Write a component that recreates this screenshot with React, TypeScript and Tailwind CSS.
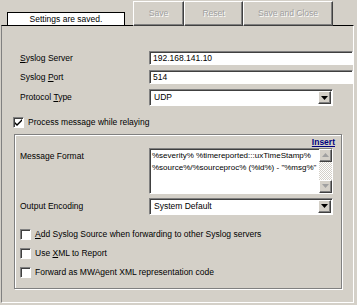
import React from 'react'

const font = { fontFamily: '"Liberation Sans", Arial, sans-serif' }

function Sunken({ className = '', children }: { className?: string; children?: React.ReactNode }) {
  return (
    <div
      className={`border border-t-[#808080] border-l-[#808080] border-b-white border-r-white bg-white shadow-[inset_1px_1px_0_#404040] ${className}`}
    >
      {children}
    </div>
  )
}

function ArrowBtn({ dir = 'down', disabled = false }: { dir?: 'up' | 'down'; disabled?: boolean }) {
  const c = disabled ? '#a0a0a0' : '#000'
  return (
    <div className="w-[13px] h-[13px] bg-[#d4d0c8] border border-t-white border-l-white border-b-[#404040] border-r-[#404040] shadow-[inset_-1px_-1px_0_#808080] flex items-center justify-center">
      <svg width="7" height="4" viewBox="0 0 7 4">
        {dir === 'down' ? <path d="M0 0h7L3.5 4z" fill={c} /> : <path d="M0 4h7L3.5 0z" fill={c} />}
      </svg>
    </div>
  )
}

function Select({ value }: { value: string }) {
  return (
    <Sunken className="w-[184px] h-[17px] flex items-center pl-[4px] pr-[1px]">
      <span className="flex-1 text-[8.5px] leading-none">{value}</span>
      <ArrowBtn />
    </Sunken>
  )
}

function Check({ checked = false, label }: { checked?: boolean; label: React.ReactNode }) {
  return (
    <div className="flex items-center gap-[4px] h-[12px]">
      <div className="w-[11px] h-[11px] bg-white border border-t-[#808080] border-l-[#808080] border-b-white border-r-white shadow-[inset_1px_1px_0_#404040] flex items-center justify-center">
        {checked && (
          <svg width="7" height="7" viewBox="0 0 7 7">
            <path d="M0 3l2 2 5-5v2l-5 5-2-2z" fill="#000" />
          </svg>
        )}
      </div>
      <span className="text-[8.5px] leading-none">{label}</span>
    </div>
  )
}

function Btn({ w, children }: { w: string; children: React.ReactNode }) {
  return (
    <div
      className={`${w} h-[25px] flex items-center justify-center border border-l-white border-t-white border-r-[#404040] border-b-[#404040] shadow-[inset_-1px_-1px_0_#808080] text-[8.5px] text-[#a0a0a0] [text-shadow:1px_1px_0_#fff]`}
    >
      {children}
    </div>
  )
}

export default function App() {
  return (
    <div className="w-[357px] h-[305px] bg-[#d4d0c8] text-black overflow-hidden" style={font}>
      {/* top strip */}
      <div className="h-[25px] flex items-end">
        <div className="ml-[7px] w-[118px] h-[13px] bg-white border border-black border-b-0 flex items-center justify-center text-[8.5px] leading-none">
          Settings are saved.
        </div>
        <div className="ml-[8px] flex -mb-px">
          <Btn w="w-[51px]">Save</Btn>
          <Btn w="w-[59px]">Reset</Btn>
          <Btn w="w-[90px]">Save and Close</Btn>
        </div>
      </div>

      {/* main panel */}
      <div className="ml-[1px] w-[353px] h-[278px] border border-t-black border-l-[#808080] border-r-white border-b-white">
        <div className="pl-[18px] pt-[25px] flex flex-col">
          <div className="flex items-center h-[14px]">
            <span className="w-[129px] text-[8.5px]">
              <u>S</u>yslog Server
            </span>
            <Sunken className="w-[204px] h-[14px] flex items-center pl-[3px] text-[8.5px]">192.168.141.10</Sunken>
          </div>
          <div className="flex items-center h-[14px] mt-[5px]">
            <span className="w-[129px] text-[8.5px]">
              Syslog <u>P</u>ort
            </span>
            <Sunken className="w-[204px] h-[14px] flex items-center pl-[3px] text-[8.5px]">514</Sunken>
          </div>
          <div className="flex items-center h-[17px] mt-[5px]">
            <span className="w-[129px] text-[8.5px]">
              Protocol <u>T</u>ype
            </span>
            <Select value="UDP" />
          </div>
        </div>

        <div className="ml-[11px] mt-[10px]">
          <Check checked label="Process message while relaying" />
        </div>

        {/* group box */}
        <div className="ml-[12px] mt-[6px] w-[328px] h-[155px] border border-[#808080] shadow-[1px_1px_0_#fff,inset_1px_1px_0_#fff] pl-[5px] pt-[3px]">
          <div className="flex justify-end pr-[6px]">
            <span className="text-[8.5px] leading-none font-bold text-[#00007f] underline">Insert</span>
          </div>
          <div className="flex mt-px">
            <span className="w-[129px] pt-[4px] text-[8.5px] leading-none">Message Format</span>
            <Sunken className="w-[184px] h-[46px] flex">
              <div className="flex-1 pl-[2px] pt-[1px] text-[8px] leading-[12px] whitespace-nowrap overflow-hidden">
                %severity% %timereported:::uxTimeStamp%
                <br />
                %source%/%sourceproc% (%id%) - "%msg%"
              </div>
              <div className="w-[13px] flex flex-col bg-[repeating-conic-gradient(#fff_0_25%,#d4d0c8_0_50%)] bg-[length:2px_2px]">
                <ArrowBtn dir="up" disabled />
                <div className="flex-1" />
                <ArrowBtn disabled />
              </div>
            </Sunken>
          </div>
          <div className="flex items-center mt-[4px]">
            <span className="w-[129px] text-[8.5px]">Output Encoding</span>
            <Select value="System Default" />
          </div>
          <div className="flex flex-col gap-[7px] mt-[14px]">
            <Check
              label={
                <>
                  <u>A</u>dd Syslog Source when forwarding to other Syslog servers
                </>
              }
            />
            <Check
              label={
                <>
                  Use <u>X</u>ML to Report
                </>
              }
            />
            <Check label="Forward as MWAgent XML representation code" />
          </div>
        </div>
      </div>
    </div>
  )
}
